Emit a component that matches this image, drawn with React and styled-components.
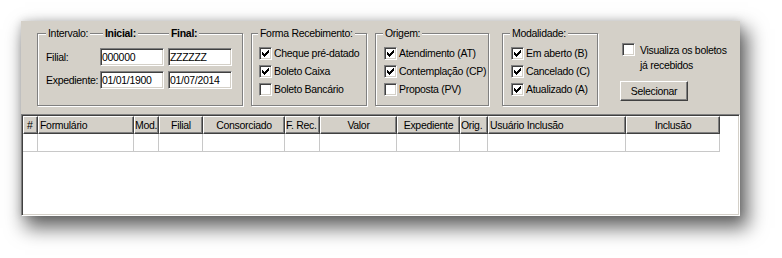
import React from 'react';
import styled, { createGlobalStyle } from 'styled-components';

const GlobalStyle = createGlobalStyle`
  body {
    margin: 0;
    background: #fff;
    font-family: "Liberation Sans", Arial, sans-serif;
    font-size: 10.5px;
    letter-spacing: -0.3px;
    color: #000;
  }
`;

const Page = styled.div`
  padding: 21px 0 40px 21px;
`;

const Window = styled.div`
  width: 719px;
  height: 195px;
  display: flex;
  flex-direction: column;
  background: #d4d0c8;
  box-shadow: 6px 10px 18px 2px rgba(0, 0, 0, 0.6), 0 0 8px rgba(0, 0, 0, 0.15);
`;

const FilterBar = styled.div`
  height: 93px;
  box-sizing: border-box;
  display: flex;
  align-items: flex-start;
  padding: 12px 0 0 16px;
`;

const GroupBox = styled.div`
  position: relative;
  box-sizing: border-box;
  width: ${p => p.$w}px;
  height: 73px;
  margin-left: ${p => p.$ml || 0}px;
  padding: 13px 0 0 ${p => p.$pl || 7}px;
  border: 1px solid #808080;
  box-shadow: inset 1px 1px 0 #fff, 1px 1px 0 #fff;
`;

const CaptionRow = styled.div`
  position: absolute;
  top: -7px;
  left: ${p => p.$left}px;
  display: grid;
  grid-template-columns: ${p => p.$cols || 'auto'};
  justify-items: start;
  line-height: 13px;
`;

const Caption = styled.span`
  background: #d4d0c8;
  padding: 0 2px;
  font-weight: ${p => (p.$bold ? 700 : 400)};
  white-space: nowrap;
`;

const FieldGrid = styled.div`
  display: grid;
  grid-template-columns: 54px 68px 64px;
  grid-auto-rows: 18px;
  row-gap: 5px;
  align-items: center;
  padding-top: 1px;
`;

const FieldLabel = styled.span`
  white-space: nowrap;
`;

const TextBox = styled.div`
  box-sizing: border-box;
  width: 64px;
  height: 18px;
  padding: 0 1px;
  display: flex;
  align-items: center;
  background: #fff;
  border-top: 1px solid #808080;
  border-left: 1px solid #808080;
  border-right: 1px solid #fff;
  border-bottom: 1px solid #fff;
  box-shadow: inset 1px 1px 0 #404040, inset -1px -1px 0 #d4d0c8;
`;

const CheckList = styled.div`
  display: flex;
  flex-direction: column;
  gap: 5px;
`;

const CheckRow = styled.label`
  display: flex;
  align-items: ${p => (p.$top ? 'flex-start' : 'center')};
  gap: ${p => p.$gap || 2}px;
  line-height: ${p => (p.$top ? 15 : 13)}px;
  white-space: nowrap;
`;

const Box = styled.span`
  flex: none;
  box-sizing: border-box;
  width: 13px;
  height: 13px;
  background: #fff;
  border-top: 1px solid #808080;
  border-left: 1px solid #808080;
  border-right: 1px solid #fff;
  border-bottom: 1px solid #fff;
  box-shadow: inset 1px 1px 0 #404040, inset -1px -1px 0 #d4d0c8;
  svg {
    display: block;
  }
`;

const checkPath = [
  [0, 2], [1, 3], [2, 4], [3, 3], [4, 2], [5, 1], [6, 0],
].map(([c, r]) => `M${c + 2} ${r + 2}h1v3h-1z`).join('');

const CheckBox = ({ checked }) => (
  <Box>
    {checked && (
      <svg width="11" height="11" viewBox="0 0 11 11" shapeRendering="crispEdges">
        <path d={checkPath} fill="#000" />
      </svg>
    )}
  </Box>
);

const Check = ({ checked, children }) => (
  <CheckRow>
    <CheckBox checked={checked} />
    <span>{children}</span>
  </CheckRow>
);

const SideColumn = styled.div`
  margin: 10px 0 0 22px;
  display: flex;
  flex-direction: column;
  align-items: flex-start;
  gap: 8px;
`;

const SideCheck = styled(CheckRow)`
  margin-left: 2px;
  white-space: normal;
`;

const Button = styled.button`
  box-sizing: border-box;
  width: 68px;
  height: 20px;
  padding: 0;
  font: inherit;
  letter-spacing: inherit;
  color: #000;
  background: #d4d0c8;
  border-top: 1px solid #fff;
  border-left: 1px solid #fff;
  border-right: 1px solid #404040;
  border-bottom: 1px solid #404040;
  box-shadow: inset -1px -1px 0 #808080;
`;

const GridFrame = styled.div`
  flex: 1;
  box-sizing: border-box;
  padding: 1px 0 0 1px;
  background: #fff;
  border-top: 1px solid #808080;
  border-left: 1px solid #808080;
  border-right: 1px solid #fff;
  border-bottom: 1px solid #fff;
  box-shadow: inset 1px 1px 0 #404040, inset -1px -1px 0 #d4d0c8;
`;

const Table = styled.div`
  display: grid;
  grid-template-columns: ${p => p.$cols};
  grid-auto-rows: 18px;
`;

const HeadCell = styled.div`
  box-sizing: border-box;
  display: flex;
  align-items: center;
  justify-content: ${p => (p.$center ? 'center' : 'flex-start')};
  padding: 0 ${p => (p.$pad ?? 1)}px;
  overflow: hidden;
  white-space: nowrap;
  background: #d4d0c8;
  border-top: 1px solid #fff;
  border-left: 1px solid #fff;
  border-right: 1px solid #404040;
  border-bottom: 1px solid #404040;
  box-shadow: inset -1px -1px 0 #808080;
`;

const BodyCell = styled.div`
  border-right: 1px solid #c8c8c8;
  border-bottom: 1px solid #c8c8c8;
`;

const columns = [
  { title: '#', w: 15, pad: 3 },
  { title: 'Formulário', w: 96 },
  { title: 'Mod.', w: 25, pad: 0 },
  { title: 'Filial', w: 44, center: true },
  { title: 'Consorciado', w: 82, center: true },
  { title: 'F. Rec.', w: 35, pad: 0 },
  { title: 'Valor', w: 77, center: true },
  { title: 'Expediente', w: 63, center: true },
  { title: 'Orig.', w: 28, pad: 0 },
  { title: 'Usuário Inclusão', w: 138 },
  { title: 'Inclusão', w: 94, center: true },
];

export default function App() {
  return (
    <Page>
      <GlobalStyle />
      <Window>
        <FilterBar>
          <GroupBox $w={206} $pl={8}>
            <CaptionRow $left={8} $cols="57px 66px auto">
              <Caption>Intervalo:</Caption>
              <Caption $bold>Inicial:</Caption>
              <Caption $bold>Final:</Caption>
            </CaptionRow>
            <FieldGrid>
              <FieldLabel>Filial:</FieldLabel>
              <TextBox>000000</TextBox>
              <TextBox>ZZZZZZ</TextBox>
              <FieldLabel>Expediente:</FieldLabel>
              <TextBox>01/01/1900</TextBox>
              <TextBox>01/07/2014</TextBox>
            </FieldGrid>
          </GroupBox>

          <GroupBox $w={116} $ml={8} $pl={7}>
            <CaptionRow $left={6}>
              <Caption>Forma Recebimento:</Caption>
            </CaptionRow>
            <CheckList>
              <Check checked>Cheque pré-datado</Check>
              <Check checked>Boleto Caixa</Check>
              <Check>Boleto Bancário</Check>
            </CheckList>
          </GroupBox>

          <GroupBox $w={114} $ml={8} $pl={8}>
            <CaptionRow $left={7}>
              <Caption>Origem:</Caption>
            </CaptionRow>
            <CheckList>
              <Check checked>Atendimento (AT)</Check>
              <Check checked>Contemplação (CP)</Check>
              <Check>Proposta (PV)</Check>
            </CheckList>
          </GroupBox>

          <GroupBox $w={96} $ml={13} $pl={8}>
            <CaptionRow $left={7}>
              <Caption>Modalidade:</Caption>
            </CaptionRow>
            <CheckList>
              <Check checked>Em aberto (B)</Check>
              <Check checked>Cancelado (C)</Check>
              <Check checked>Atualizado (A)</Check>
            </CheckList>
          </GroupBox>

          <SideColumn>
            <SideCheck $top $gap={5}>
              <CheckBox />
              <span>
                Visualiza os boletos
                <br />
                já recebidos
              </span>
            </SideCheck>
            <Button>Selecionar</Button>
          </SideColumn>
        </FilterBar>

        <GridFrame>
          <Table $cols={columns.map(c => `${c.w}px`).join(' ')}>
            {columns.map(c => (
              <HeadCell key={c.title} $center={c.center} $pad={c.pad}>
                {c.title}
              </HeadCell>
            ))}
            {columns.map(c => (
              <BodyCell key={c.title} />
            ))}
          </Table>
        </GridFrame>
      </Window>
    </Page>
  );
}
